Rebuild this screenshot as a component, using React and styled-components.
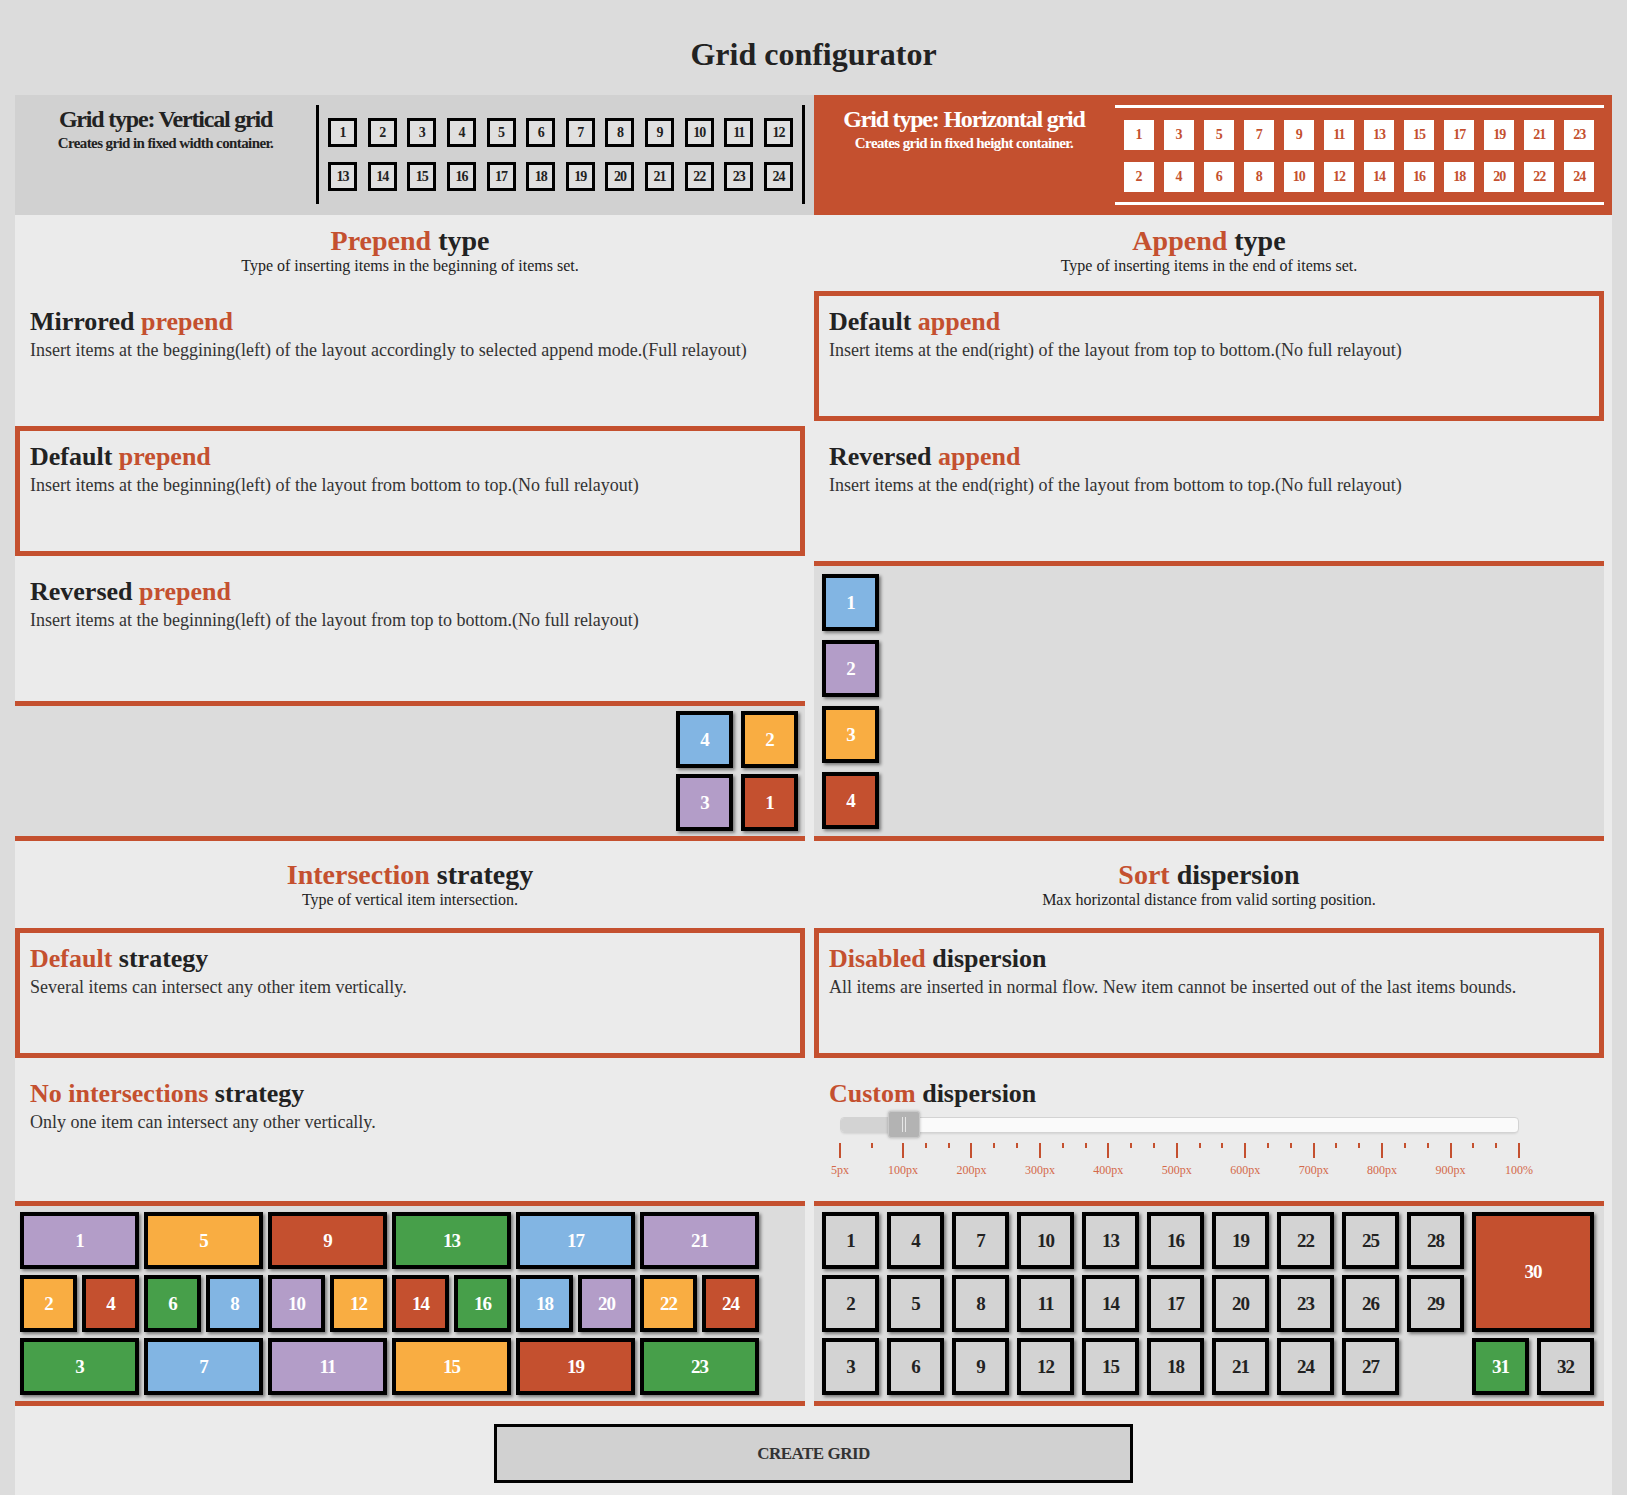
import styled, { createGlobalStyle } from "styled-components";

const ACCENT = "#c4502f";

const COLORS = {
  blue: "#82b5e3",
  purple: "#b39dc8",
  orange: "#f9ad42",
  green: "#479f4a",
  red: "#c4502f",
  gray: "#d3d3d3",
};

const GlobalStyle = createGlobalStyle`
  html, body {
    margin: 0;
    padding: 0;
  }
  body {
    background: #dcdcdc;
    font-family: "Liberation Serif", "Times New Roman", serif;
    color: #222;
  }
`;

const Page = styled.div`
  width: 1627px;
`;

const Title = styled.h1`
  margin: 0;
  padding: 36px 0 22px;
  font-size: 32px;
  line-height: 37px;
  font-weight: bold;
  text-align: center;
  color: #222;
`;

const Main = styled.main`
  margin-left: 15px;
  width: 1597px;
  min-height: 1400px;
  box-sizing: border-box;
  padding-bottom: 11px;
  background: #ebebeb;
`;

/* grid type bar */

const TypeBar = styled.div`
  display: grid;
  grid-template-columns: 1fr 1fr;
  height: 120px;
`;

const TypeHalf = styled.div`
  display: grid;
  grid-template-columns: 301px 489px;
  background: ${(p) => (p.$active ? ACCENT : "#d1d1d1")};
  color: ${(p) => (p.$active ? "#fff" : "#222")};
`;

const TypeInfo = styled.div`
  padding-top: 10px;
  text-align: center;
`;

const TypeName = styled.div`
  font-size: 24px;
  line-height: 28px;
  font-weight: bold;
  letter-spacing: -1.2px;
`;

const TypeDesc = styled.div`
  margin-top: 1px;
  font-size: 15px;
  line-height: 18px;
  font-weight: bold;
  letter-spacing: -0.6px;
`;

const MiniFrame = styled.div`
  box-sizing: border-box;
  margin-top: 10px;
  display: flex;
  flex-direction: column;
  ${(p) =>
    p.$horizontal
      ? `
    height: 100px;
    padding: 12px 9px 0;
    gap: 12px;
    border-top: 3px solid #fff;
    border-bottom: 3px solid #fff;
  `
      : `
    height: 99px;
    padding: 13px 9px 0;
    gap: 15px;
    border-left: 3px solid #000;
    border-right: 3px solid #000;
  `}
`;

const MiniRow = styled.div`
  display: flex;
  justify-content: space-between;
`;

const MiniBox = styled.div`
  box-sizing: border-box;
  width: ${(p) => (p.$horizontal ? 30 : 29)}px;
  height: ${(p) => (p.$horizontal ? 30 : 29)}px;
  display: flex;
  align-items: center;
  justify-content: center;
  font-size: 14px;
  font-weight: bold;
  letter-spacing: -1px;
  background: ${(p) => (p.$horizontal ? "#fff" : "#e0e0e0")};
  color: ${(p) => (p.$horizontal ? ACCENT : "#222")};
  border: ${(p) => (p.$horizontal ? "none" : "3px solid #000")};
`;

/* sections */

const Columns = styled.div`
  display: grid;
  grid-template-columns: 790px 790px;
  column-gap: 9px;
`;

const Column = styled.section`
  display: flex;
  flex-direction: column;
`;

const SectionHead = styled.header`
  text-align: center;
  padding-top: ${(p) => p.$top}px;
  margin-bottom: ${(p) => p.$bottom}px;
`;

const SectionTitle = styled.h2`
  margin: 0;
  font-size: 28px;
  line-height: 32px;
  font-weight: bold;
  color: #222;
`;

const SectionSub = styled.p`
  margin: 0;
  font-size: 16px;
  line-height: 18px;
  color: #222;
`;

const Accent = styled.span`
  color: ${ACCENT};
`;

const Option = styled.div`
  box-sizing: border-box;
  height: 130px;
  margin-bottom: 5px;
  padding: 11px 10px 0;
  border: 5px solid ${(p) => (p.$selected ? ACCENT : "transparent")};
`;

const OptionTitle = styled.h3`
  margin: 0;
  font-size: 26px;
  line-height: 30px;
  font-weight: bold;
  color: #222;
`;

const OptionText = styled.p`
  margin: 3px 0 0;
  font-size: 18px;
  line-height: 21px;
  color: #333;
`;

/* previews */

const Preview = styled.div`
  box-sizing: border-box;
  height: ${(p) => p.$height}px;
  margin-top: ${(p) => (p.$pushDown ? "auto" : `${p.$mt || 0}px`)};
  border-top: 5px solid ${ACCENT};
  border-bottom: 5px solid ${ACCENT};
  background: #dcdcdc;
`;

const PrependGrid = styled.div`
  display: grid;
  grid-template-columns: repeat(2, 57px);
  grid-auto-rows: 57px;
  gap: 6px 8px;
  justify-content: end;
  padding: 5px 7px 0 0;
`;

const AppendStack = styled.div`
  display: flex;
  flex-direction: column;
  gap: 9px;
  padding: 8px 0 0 8px;
`;

const TileGrid = styled.div`
  display: grid;
  grid-template-columns: repeat(12, 57px);
  grid-auto-rows: 57px;
  row-gap: 6px;
  column-gap: ${(p) => p.$colGap}px;
  padding: 6px 0 0 ${(p) => p.$left}px;
`;

const Tile = styled.div`
  box-sizing: border-box;
  width: ${(p) => (p.$fixed ? "57px" : "auto")};
  height: ${(p) => (p.$fixed ? "57px" : "auto")};
  display: flex;
  align-items: center;
  justify-content: center;
  border: 4px solid #000;
  background: ${(p) => COLORS[p.$color]};
  color: ${(p) => (p.$color === "gray" ? "#222" : "#fff")};
  font-size: 19px;
  font-weight: bold;
  letter-spacing: -1px;
  box-shadow: 2px 2px 3px rgba(0, 0, 0, 0.45);
  grid-column: ${(p) => (p.$col ? `${p.$col} / span ${p.$span || 1}` : `span ${p.$span || 1}`)};
  grid-row: ${(p) => (p.$row ? `${p.$row} / span ${p.$rowSpan || 1}` : "auto")};
`;

/* slider */

const Slider = styled.div`
  position: relative;
  box-sizing: border-box;
  width: 679px;
  height: 16px;
  margin: 8px 0 0 11px;
  background: #fafafa;
  border: 1px solid #d3d3d3;
  border-radius: 4px;
  box-shadow: 0 2px 3px -2px rgba(0, 0, 0, 0.2);
`;

const SliderFill = styled.div`
  position: absolute;
  left: 0;
  top: 0;
  bottom: 0;
  background: #d3d3d3;
  border-radius: 3px 0 0 3px;
`;

const Handle = styled.div`
  position: absolute;
  top: -7px;
  width: 32px;
  height: 27px;
  box-sizing: border-box;
  background: #b3b3b3;
  border: 1px solid #c9c9c9;
  border-radius: 3px;
  box-shadow: 0 0 3px rgba(0, 0, 0, 0.25);
  &::before,
  &::after {
    content: "";
    position: absolute;
    top: 5px;
    width: 1px;
    height: 15px;
    background: #e6e6e6;
  }
  &::before {
    left: 13px;
  }
  &::after {
    left: 16px;
  }
`;

const Scale = styled.div`
  position: relative;
  width: 679px;
  height: 34px;
  margin: 10px 0 0 11px;
`;

const Tick = styled.div`
  position: absolute;
  top: 0;
  width: 2px;
  margin-left: -1px;
  height: ${(p) => (p.$big ? 15 : 5)}px;
  background: ${ACCENT};
`;

const TickLabel = styled.div`
  position: absolute;
  top: 20px;
  transform: translateX(-50%);
  font-size: 12px;
  line-height: 14px;
  color: #d4694a;
  white-space: nowrap;
`;

const CreateButton = styled.button`
  display: block;
  margin: 18px auto 0;
  width: 639px;
  height: 59px;
  box-sizing: border-box;
  border: 3px solid #000;
  background: #d1d1d1;
  font-family: inherit;
  font-size: 17px;
  font-weight: bold;
  letter-spacing: -0.5px;
  color: #333;
  cursor: pointer;
`;

/* data */

const range = (a, b) => Array.from({ length: b - a + 1 }, (_, i) => a + i);

const verticalRows = [range(1, 12), range(13, 24)];
const horizontalRows = [range(0, 11).map((i) => i * 2 + 1), range(0, 11).map((i) => i * 2 + 2)];

const prependTiles = [
  { n: 4, c: "blue" },
  { n: 2, c: "orange" },
  { n: 3, c: "purple" },
  { n: 1, c: "red" },
];

const appendTiles = [
  { n: 1, c: "blue" },
  { n: 2, c: "purple" },
  { n: 3, c: "orange" },
  { n: 4, c: "red" },
];

const intersectionTiles = [
  ...[
    [1, "purple"],
    [5, "orange"],
    [9, "red"],
    [13, "green"],
    [17, "blue"],
    [21, "purple"],
  ].map(([n, c]) => ({ n, c, span: 2 })),
  ...[
    [2, "orange"],
    [4, "red"],
    [6, "green"],
    [8, "blue"],
    [10, "purple"],
    [12, "orange"],
    [14, "red"],
    [16, "green"],
    [18, "blue"],
    [20, "purple"],
    [22, "orange"],
    [24, "red"],
  ].map(([n, c]) => ({ n, c, span: 1 })),
  ...[
    [3, "green"],
    [7, "blue"],
    [11, "purple"],
    [15, "orange"],
    [19, "red"],
    [23, "green"],
  ].map(([n, c]) => ({ n, c, span: 2 })),
];

const sortTiles = [
  ...range(1, 29).map((n) => ({
    n,
    c: "gray",
    col: Math.floor((n - 1) / 3) + 1,
    row: ((n - 1) % 3) + 1,
  })),
  { n: 30, c: "red", col: 11, row: 1, span: 2, rowSpan: 2 },
  { n: 31, c: "green", col: 11, row: 3 },
  { n: 32, c: "gray", col: 12, row: 3 },
];

const SCALE_WIDTH = 679;
const bigTicks = [0, ...range(1, 10).map((k) => 63 + (k - 1) * ((SCALE_WIDTH - 63) / 9))];
const tickLabels = ["5px", "100px", "200px", "300px", "400px", "500px", "600px", "700px", "800px", "900px", "100%"];
const smallTicks = bigTicks.slice(0, -1).flatMap((x, i) => {
  const next = bigTicks[i + 1];
  if (i === 0) return [(x + next) / 2];
  return [x + (next - x) / 3, x + ((next - x) * 2) / 3];
});

const sliderValue = 50;

/* components */

const GridType = ({ active, horizontal, name, desc, rows }) => (
  <TypeHalf $active={active}>
    <TypeInfo>
      <TypeName>Grid type: {name}</TypeName>
      <TypeDesc>{desc}</TypeDesc>
    </TypeInfo>
    <MiniFrame $horizontal={horizontal}>
      {rows.map((row, i) => (
        <MiniRow key={i}>
          {row.map((n) => (
            <MiniBox key={n} $horizontal={horizontal}>
              {n}
            </MiniBox>
          ))}
        </MiniRow>
      ))}
    </MiniFrame>
  </TypeHalf>
);

const OptionBlock = ({ selected, title, text, children }) => (
  <Option $selected={selected}>
    <OptionTitle>{title}</OptionTitle>
    {text && <OptionText>{text}</OptionText>}
    {children}
  </Option>
);

const DispersionSlider = () => (
  <>
    <Slider>
      <SliderFill style={{ width: sliderValue }} />
      <Handle style={{ left: sliderValue - 3 }} />
    </Slider>
    <Scale>
      {bigTicks.map((x, i) => (
        <Tick key={`b${i}`} $big style={{ left: x }} />
      ))}
      {smallTicks.map((x, i) => (
        <Tick key={`s${i}`} style={{ left: x }} />
      ))}
      {bigTicks.map((x, i) => (
        <TickLabel key={`l${i}`} style={{ left: x }}>
          {tickLabels[i]}
        </TickLabel>
      ))}
    </Scale>
  </>
);

export default function App() {
  return (
    <Page>
      <GlobalStyle />
      <Title>Grid configurator</Title>
      <Main>
        <TypeBar>
          <GridType
            name="Vertical grid"
            desc="Creates grid in fixed width container."
            rows={verticalRows}
          />
          <GridType
            active
            horizontal
            name="Horizontal grid"
            desc="Creates grid in fixed height container."
            rows={horizontalRows}
          />
        </TypeBar>

        <Columns>
          <Column>
            <SectionHead $top={10} $bottom={16}>
              <SectionTitle>
                <Accent>Prepend</Accent> type
              </SectionTitle>
              <SectionSub>Type of inserting items in the beginning of items set.</SectionSub>
            </SectionHead>
            <OptionBlock
              title={
                <>
                  Mirrored <Accent>prepend</Accent>
                </>
              }
              text="Insert items at the beggining(left) of the layout accordingly to selected append mode.(Full relayout)"
            />
            <OptionBlock
              selected
              title={
                <>
                  Default <Accent>prepend</Accent>
                </>
              }
              text="Insert items at the beginning(left) of the layout from bottom to top.(No full relayout)"
            />
            <OptionBlock
              title={
                <>
                  Reversed <Accent>prepend</Accent>
                </>
              }
              text="Insert items at the beginning(left) of the layout from top to bottom.(No full relayout)"
            />
            <Preview $height={140} $pushDown>
              <PrependGrid>
                {prependTiles.map((t) => (
                  <Tile key={t.n} $color={t.c} $fixed>
                    {t.n}
                  </Tile>
                ))}
              </PrependGrid>
            </Preview>
          </Column>

          <Column>
            <SectionHead $top={10} $bottom={16}>
              <SectionTitle>
                <Accent>Append</Accent> type
              </SectionTitle>
              <SectionSub>Type of inserting items in the end of items set.</SectionSub>
            </SectionHead>
            <OptionBlock
              selected
              title={
                <>
                  Default <Accent>append</Accent>
                </>
              }
              text="Insert items at the end(right) of the layout from top to bottom.(No full relayout)"
            />
            <OptionBlock
              title={
                <>
                  Reversed <Accent>append</Accent>
                </>
              }
              text="Insert items at the end(right) of the layout from bottom to top.(No full relayout)"
            />
            <Preview $height={280}>
              <AppendStack>
                {appendTiles.map((t) => (
                  <Tile key={t.n} $color={t.c} $fixed>
                    {t.n}
                  </Tile>
                ))}
              </AppendStack>
            </Preview>
          </Column>
        </Columns>

        <Columns>
          <Column>
            <SectionHead $top={18} $bottom={19}>
              <SectionTitle>
                <Accent>Intersection</Accent> strategy
              </SectionTitle>
              <SectionSub>Type of vertical item intersection.</SectionSub>
            </SectionHead>
            <OptionBlock
              selected
              title={
                <>
                  <Accent>Default</Accent> strategy
                </>
              }
              text="Several items can intersect any other item vertically."
            />
            <OptionBlock
              title={
                <>
                  <Accent>No intersections</Accent> strategy
                </>
              }
              text="Only one item can intersect any other vertically."
            />
            <Preview $height={205} $mt={3}>
              <TileGrid $colGap={5} $left={5}>
                {intersectionTiles.map((t) => (
                  <Tile key={t.n} $color={t.c} $span={t.span}>
                    {t.n}
                  </Tile>
                ))}
              </TileGrid>
            </Preview>
          </Column>

          <Column>
            <SectionHead $top={18} $bottom={19}>
              <SectionTitle>
                <Accent>Sort</Accent> dispersion
              </SectionTitle>
              <SectionSub>Max horizontal distance from valid sorting position.</SectionSub>
            </SectionHead>
            <OptionBlock
              selected
              title={
                <>
                  <Accent>Disabled</Accent> dispersion
                </>
              }
              text="All items are inserted in normal flow. New item cannot be inserted out of the last items bounds."
            />
            <OptionBlock
              title={
                <>
                  <Accent>Custom</Accent> dispersion
                </>
              }
            >
              <DispersionSlider />
            </OptionBlock>
            <Preview $height={205} $mt={3}>
              <TileGrid $colGap={8} $left={8}>
                {sortTiles.map((t) => (
                  <Tile
                    key={t.n}
                    $color={t.c}
                    $col={t.col}
                    $row={t.row}
                    $span={t.span}
                    $rowSpan={t.rowSpan}
                  >
                    {t.n}
                  </Tile>
                ))}
              </TileGrid>
            </Preview>
          </Column>
        </Columns>

        <CreateButton>CREATE GRID</CreateButton>
      </Main>
    </Page>
  );
}
